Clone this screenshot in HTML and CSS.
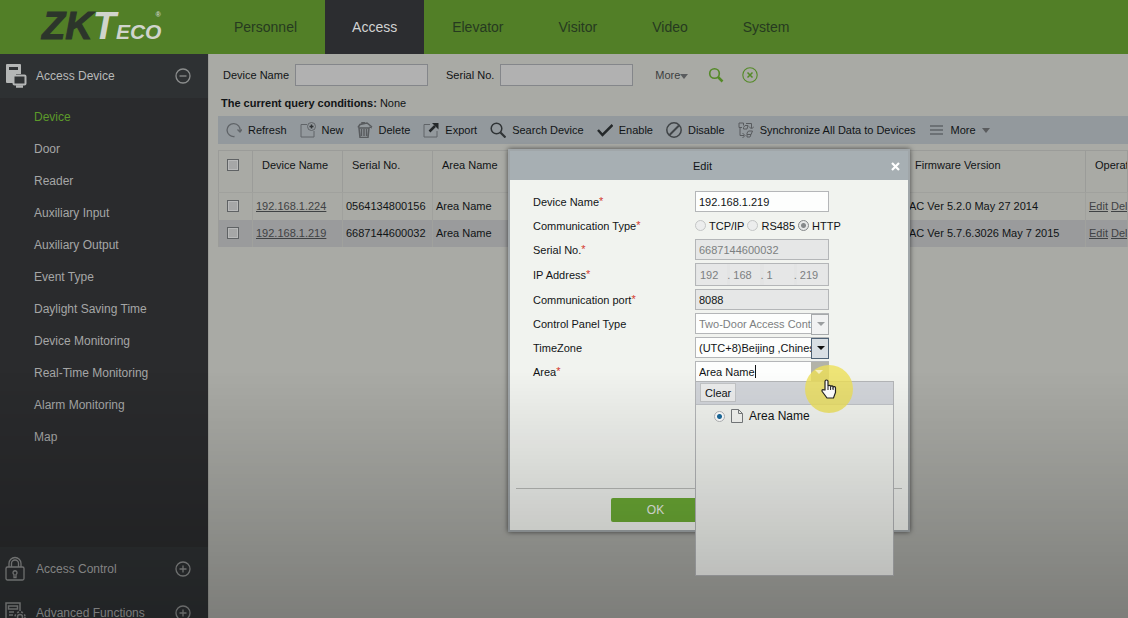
FILE: index.html
```html
<!DOCTYPE html>
<html lang="en">
<head>
    <meta charset="UTF-8">
    <meta name="viewport" content="width=device-width, initial-scale=1.0">
    <title>ZKTeco - Access Device</title>
    <link rel="stylesheet" href="styles.css">
</head>
<body>

    <!-- Top navigation -->
    <header class="topbar">
        <a href="#" class="logo"><span class="logo-zk">ZK</span><span class="logo-t">T</span><span class="logo-eco">ECO</span><span class="logo-reg">®</span></a>
        <nav class="topnav">
            <a href="#">Personnel</a>
            <a href="#" class="active">Access</a>
            <a href="#">Elevator</a>
            <a href="#">Visitor</a>
            <a href="#">Video</a>
            <a href="#">System</a>
        </nav>
    </header>

    <div class="layout">
        <!-- Sidebar -->
        <aside class="sidebar">
            <a href="#" class="group-title open">
                <svg width="24" height="26" viewBox="0 0 24 26">
                    <path d="M2 1h13a1 1 0 0 1 1 1v9h-5v9H2a1 1 0 0 1-1-1V2a1 1 0 0 1 1-1z" fill="#b4b6b6"/>
                    <path d="M4 5.500h9" stroke="#303335" stroke-width="3"/>
                    <rect x="8.500" y="12.500" width="12" height="9" rx="1" fill="#303335" stroke="#b4b6b6" stroke-width="2"/>
                    <path d="M11 23.500h7" stroke="#b4b6b6" stroke-width="2.500"/>
                </svg>
                <span>Access Device</span>
                <svg class="toggle" width="16" height="16" viewBox="0 0 16 16"><circle cx="8" cy="8" r="7"/><path d="M4.500 8h7"/></svg>
            </a>
            <ul class="submenu">
                <li><a href="#" class="current">Device</a></li>
                <li><a href="#">Door</a></li>
                <li><a href="#">Reader</a></li>
                <li><a href="#">Auxiliary Input</a></li>
                <li><a href="#">Auxiliary Output</a></li>
                <li><a href="#">Event Type</a></li>
                <li><a href="#">Daylight Saving Time</a></li>
                <li><a href="#">Device Monitoring</a></li>
                <li><a href="#">Real-Time Monitoring</a></li>
                <li><a href="#">Alarm Monitoring</a></li>
                <li><a href="#">Map</a></li>
            </ul>
            <a href="#" class="group-title">
                <svg width="24" height="26" viewBox="0 0 24 26" fill="none" stroke="#8b8d8d" stroke-width="1.300">
                    <rect x="1" y="11" width="18" height="13" rx="1.500"/>
                    <path d="M4 11V7.500a6 6 0 0 1 12 0V11M6.500 11V7.500a3.500 3.500 0 0 1 7 0V11"/>
                    <path d="M9 18.500a2 2 0 1 1 2 0V21.500H9z"/>
                </svg>
                <span>Access Control</span>
                <svg class="toggle" width="16" height="16" viewBox="0 0 16 16"><circle cx="8" cy="8" r="7"/><path d="M4.500 8h7M8 4.500v7"/></svg>
            </a>
            <a href="#" class="group-title">
                <svg width="24" height="26" viewBox="0 0 24 26" fill="none" stroke="#8b8d8d" stroke-width="1.500">
                    <path d="M9 22H1V3h14v8"/>
                    <path d="M3.500 6h9v3h-9zM4 12h5M4 15h4"/>
                    <circle cx="15" cy="17" r="2.500"/>
                    <circle cx="15" cy="17" r="5" stroke-dasharray="2 2"/>
                </svg>
                <span>Advanced Functions</span>
                <svg class="toggle" width="16" height="16" viewBox="0 0 16 16"><circle cx="8" cy="8" r="7"/><path d="M4.500 8h7M8 4.500v7"/></svg>
            </a>
        </aside>

        <main class="content">
            <!-- Query form -->
            <form class="query">
                <label for="q-name">Device Name</label>
                <input type="text" id="q-name">
                <label for="q-serial">Serial No.</label>
                <input type="text" id="q-serial">
                <a href="#" class="query-more">More<i class="caret"></i></a>
                <button type="button" aria-label="Search">
                    <svg width="16" height="16" viewBox="0 0 16 16" fill="none" stroke="#548a27"><circle cx="6.500" cy="6.500" r="4.800" stroke-width="1.600"/><path d="M10 10l4.500 4.500" stroke-width="2.500"/></svg>
                </button>
                <button type="button" aria-label="Clear">
                    <svg width="16" height="16" viewBox="0 0 16 16" fill="none" stroke="#548a27"><circle cx="8" cy="8" r="7.200" stroke-width="1.100"/><path d="M5.500 5.500l5 5M10.500 5.500l-5 5" stroke-width="1.500"/></svg>
                </button>
            </form>
            <p class="conditions"><b>The current query conditions:</b> None</p>

            <!-- Toolbar -->
            <div class="toolbar">
                <button type="button">
                    <svg viewBox="0 0 16 16" stroke="#606468" stroke-width="1.300"><path d="M8.500 14.500A6.500 6.500 0 1 1 14 9M11.500 7.500L14 10l2-2.500"/></svg>Refresh
                </button>
                <button type="button">
                    <svg viewBox="0 0 16 16" stroke="#606468"><path d="M7 2.500H1V15h13V9"/><circle cx="11.500" cy="4.500" r="4"/><path d="M9.500 4.500h4M11.500 2.500v4" stroke="#303436" stroke-width="1.500"/></svg>New
                </button>
                <button type="button">
                    <svg viewBox="0 0 16 16" stroke="#585b5e"><path d="M2 6h10l-1 9.500H3zM1 5.500l2-3 7-1.500 5 4M5 2V.8h3M4.500 7v7M7 7v7M9.500 7v7" stroke-width="1.500"/><path d="M12 5l3 1"/></svg>Delete
                </button>
                <button type="button">
                    <svg viewBox="0 0 16 16" stroke="#606468"><path d="M7 2.500H1V15h13V9"/><path d="M6.500 9.500L12 4" stroke="#24282a" stroke-width="2.500"/><path d="M9 1h6.500v6.500z" fill="#24282a" stroke="none"/></svg>Export
                </button>
                <button type="button">
                    <svg viewBox="0 0 16 16" stroke="#303436"><circle cx="6.500" cy="6.500" r="5.300" stroke-width="1.500"/><path d="M10.500 10.500L15.500 15.500" stroke-width="2.200"/></svg>Search Device
                </button>
                <button type="button">
                    <svg viewBox="0 0 16 16"><path d="M1 8l4.500 5L15.500 3" stroke="#24282a" stroke-width="2.500"/></svg>Enable
                </button>
                <button type="button">
                    <svg viewBox="0 0 16 16" stroke="#404447" stroke-width="1.500"><circle cx="8" cy="8" r="7.200"/><path d="M3.500 13L13 3.500" stroke-width="2"/></svg>Disable
                </button>
                <button type="button">
                    <svg viewBox="0 0 16 16" stroke="#585b5e"><path d="M5.500 3.500V1H1v4.500h3M2 5.500v8h4M4.500 11l2.500 2.500L4.500 16M8 1.500h5.500V6M11 4.500L13.500 7 16 4.500M5.500 5.500l1.500-2h3l-1 3.500H5.500zM9 11l1.500-2h4L13 12.500H9zM9 12.500V15h3l1-2.500"/></svg>Synchronize All Data to Devices
                </button>
                <button type="button">
                    <svg viewBox="0 0 16 16" stroke="#606468" stroke-width="1.500"><path d="M1 4h13M1 8h13M1 12h13"/></svg>More <i class="caret"></i>
                </button>
            </div>

            <!-- Device list -->
            <table class="grid">
                <colgroup>
                    <col class="col-check">
                    <col class="col-name">
                    <col class="col-name">
                    <col class="col-name">
                    <col class="col-info">
                    <col class="col-firmware">
                    <col>
                </colgroup>
                <thead>
                    <tr>
                        <th><input type="checkbox" aria-label="Select all"></th>
                        <th>Device Name</th>
                        <th>Serial No.</th>
                        <th>Area Name</th>
                        <th></th>
                        <th>Firmware Version</th>
                        <th>Operations</th>
                    </tr>
                </thead>
                <tbody>
                    <tr>
                        <td><input type="checkbox" aria-label="Select 192.168.1.224"></td>
                        <td><a href="#">192.168.1.224</a></td>
                        <td>0564134800156</td>
                        <td>Area Name</td>
                        <td></td>
                        <td>AC Ver 5.2.0 May 27 2014</td>
                        <td><a href="#">Edit</a> <a href="#">Delete</a></td>
                    </tr>
                    <tr>
                        <td><input type="checkbox" aria-label="Select 192.168.1.219"></td>
                        <td><a href="#">192.168.1.219</a></td>
                        <td>6687144600032</td>
                        <td>Area Name</td>
                        <td></td>
                        <td>AC Ver 5.7.6.3026 May 7 2015</td>
                        <td><a href="#">Edit</a> <a href="#">Delete</a></td>
                    </tr>
                </tbody>
            </table>

            <!-- Edit dialog -->
            <section class="dialog" role="dialog" aria-labelledby="dialog-title">
                <div class="dialog-head">
                    <h2 id="dialog-title">Edit</h2>
                    <button type="button" class="dialog-close" aria-label="Close">
                        <svg width="9" height="9" viewBox="0 0 9 9"><path d="M1 1l7 7M8 1L1 8" stroke="#fff" stroke-width="2.200"/></svg>
                    </button>
                </div>
                <form class="dialog-body">
                    <div class="fields">
                        <label for="name">Device Name<em>*</em></label>
                        <input type="text" id="name" class="edited" value="192.168.1.219">

                        <span id="type-label">Communication Type<em>*</em></span>
                        <div class="radios" role="radiogroup" aria-labelledby="type-label">
                            <input type="radio" name="type" id="tcp" disabled><label for="tcp">TCP/IP</label>
                            <input type="radio" name="type" id="rs485" disabled><label for="rs485">RS485</label>
                            <input type="radio" name="type" id="http" checked disabled><label for="http">HTTP</label>
                        </div>

                        <label for="serial">Serial No.<em>*</em></label>
                        <input type="text" id="serial" value="6687144600032" disabled>

                        <label for="ip1">IP Address<em>*</em></label>
                        <div class="ip">
                            <input type="text" id="ip1" value="192" disabled>.
                            <input type="text" aria-label="IP part 2" value="168" disabled>.
                            <input type="text" aria-label="IP part 3" value="1" disabled>.
                            <input type="text" aria-label="IP part 4" value="219" disabled>
                        </div>

                        <label for="port">Communication port<em>*</em></label>
                        <input type="text" id="port" value="8088" readonly>

                        <label for="panel">Control Panel Type</label>
                        <div class="combo disabled">
                            <select id="panel" disabled><option>Two-Door Access Control Panel</option></select>
                        </div>

                        <label for="zone">TimeZone</label>
                        <div class="combo">
                            <select id="zone"><option>(UTC+8)Beijing ,Chinese</option></select>
                        </div>

                        <label for="area">Area<em>*</em></label>
                        <div class="combo focused">
                            <input type="text" id="area" value="Area Name">
                            <i class="text-cursor"></i>
                            <div class="area-menu">
                                <div class="area-tools"><button type="button">Clear</button></div>
                                <div class="area-item">
                                    <input type="radio" name="area-pick" id="area-1" checked>
                                    <label for="area-1">
                                        <svg width="12" height="14" viewBox="0 0 12 14" fill="#f4f5f2" stroke="#777a7c"><path d="M.5.5h7l4 4v9H.5zM7.500.5v4h4"/></svg>
                                        Area Name
                                    </label>
                                </div>
                            </div>
                            <div class="pointer">
                                <svg width="16" height="20" viewBox="0 0 16 20"><path d="M4 11V2.500a1.500 1.500 0 0 1 3 0V7.500a1.300 1.300 0 0 1 2.600.2 1.300 1.300 0 0 1 2.500.5 1.300 1.300 0 0 1 2.400.8v4.500L12.500 19H6L1.200 12.500C.5 11 2 10 3 11z" fill="#fff" stroke="#222" stroke-width="1.200"/><path d="M7 7.500V11M9.600 8v3M12.100 8.500V11" stroke="#222"/></svg>
                            </div>
                        </div>
                    </div>
                    <div class="dialog-foot">
                        <button type="submit">OK</button>
                    </div>
                </form>
            </section>
        </main>
    </div>

</body>
</html>
```

FILE: styles.css
```css
* {
    box-sizing: border-box;
}

body {
    margin: 0;
    height: 100vh;
    overflow: hidden;
    font-family: "Liberation Sans", Arial, sans-serif;
    font-size: 11px;
    color: #111416;
    background: #a9aaa5;
}

/* Dimming towards the bottom of the page */
body::after {
    content: "";
    position: fixed;
    inset: 0;
    background: linear-gradient(rgba(0, 0, 0, 0) 60%, rgba(0, 0, 0, 0.26) 100%);
    pointer-events: none;
    z-index: 10;
}

button, input, select {
    font: inherit;
    color: inherit;
}

button {
    padding: 0;
    border: none;
    background: none;
    cursor: pointer;
}

a {
    color: inherit;
    text-decoration: none;
}

/* Top bar */
.topbar {
    display: flex;
    height: 54px;
    background: #527f27;
}

.logo {
    display: flex;
    align-items: baseline;
    width: 207px;
    padding: 4px 0 0 42px;
    font-size: 38px;
    font-weight: bold;
    font-style: italic;
    line-height: 44px;
    color: #d0d4cc;
}

.logo-zk {
    color: #2c352b;
    -webkit-text-stroke: 1px #2c352b;
}

.logo-eco {
    font-size: 21px;
}

.logo-reg {
    align-self: flex-start;
    margin-left: -6px;
    font-size: 7px;
    line-height: 22px;
}

.topnav {
    display: flex;
    gap: 1px;
}

.topnav a {
    padding: 0 27px;
    font-size: 14px;
    line-height: 54px;
    color: #263a20;
}

.topnav .active {
    background: #2c2d30;
    color: #d2d3d3;
}

.layout {
    display: flex;
    height: calc(100vh - 54px);
}

/* Sidebar */
.sidebar {
    flex: 0 0 208px;
    background: #2a2b2d;
    font-size: 12px;
    color: #a5a6a6;
    overflow: hidden;
}

.group-title {
    display: flex;
    align-items: center;
    height: 44px;
    padding: 0 17px 0 5px;
    background: #2e3133;
}

.group-title span {
    flex: 1;
    margin-left: 7px;
}

.open {
    color: #b9baba;
}

.toggle {
    fill: none;
    stroke: #8b8d8d;
    stroke-width: 1.3;
}

.submenu {
    height: calc(100vh - 169px);
    margin: 0;
    padding: 3px 0 0;
    list-style: none;
}

.submenu a {
    display: block;
    padding-left: 34px;
    line-height: 32px;
}

.submenu .current {
    color: #5c9a2a;
}

/* Content */
.content {
    flex: 1;
    min-width: 0;
    position: relative;
    padding-left: 9px;
    border-left: 1px solid #9b9c97;
}

.query {
    display: flex;
    align-items: center;
    height: 42px;
    padding-left: 5px;
}

.query input {
    width: 133px;
    height: 22px;
    margin: 0 18px 0 6px;
    border: 1px solid #84868a;
    background: #b1b1b1;
}

.query button {
    height: 16px;
    margin-left: 18px;
}

.query-more {
    margin: 0 2px 0 4px;
    color: #3c3e3f;
}

.caret {
    display: inline-block;
    border: 4px solid transparent;
    border-top: 5px solid #5a5c5e;
    border-bottom: none;
    vertical-align: middle;
}

.conditions {
    margin: 0;
    padding-left: 3px;
    line-height: 14px;
}

.toolbar {
    display: flex;
    gap: 13px;
    height: 28px;
    margin: 6px 0;
    padding-left: 8px;
    background: #93999d;
    white-space: nowrap;
}

.toolbar button {
    display: flex;
    align-items: center;
    gap: 6px;
}

.toolbar svg {
    width: 16px;
    height: 16px;
    fill: none;
}

/* Device list */
.grid {
    width: 100%;
    table-layout: fixed;
    border-collapse: collapse;
    border-top: 1px solid #9b9c99;
    border-left: 1px solid #9b9c99;
}

.col-check {
    width: 34px;
}

.col-name {
    width: 90px;
}

.col-info {
    width: 383px;
}

.col-firmware {
    width: 180px;
}

.grid th {
    height: 42px;
    padding: 0 0 14px 9px;
    border-right: 1px solid #9b9c99;
    border-bottom: 1px solid #a0a19d;
    font-weight: normal;
    text-align: left;
    white-space: nowrap;
    overflow: hidden;
}

.grid td {
    height: 27px;
    padding: 0 0 0 3px;
    border-right: 1px solid #a0a19d;
    white-space: nowrap;
    overflow: hidden;
}

.grid tbody tr:nth-child(2) {
    background: #9a9b9c;
}

.grid th:first-child, .grid td:first-child {
    padding-left: 8px;
}

.grid a {
    color: #3f4244;
    text-decoration: underline;
}

.grid input {
    appearance: none;
    display: block;
    width: 12px;
    height: 12px;
    margin: 0;
    border: 1px solid #5f6264;
    background: #a6a7a7;
    box-shadow: inset 0 0 0 1px #b9baba;
}

/* Edit dialog */
.dialog {
    position: absolute;
    left: 299px;
    top: 95px;
    width: 402px;
    border: 2px solid #a0a6a9;
    background: #f1f3ef;
    box-shadow: 0 0 5px rgba(0, 0, 0, 0.6);
}

.dialog-head {
    display: flex;
    align-items: center;
    height: 29px;
    padding-right: 8px;
    background: #a7afb3;
}

.dialog-head h2 {
    flex: 1;
    margin: 0;
    padding-left: 4px;
    font-size: 11px;
    font-weight: normal;
    text-align: center;
}

.dialog-close {
    height: 9px;
}

.dialog-body {
    padding: 11px 6px 8px;
}

.fields {
    display: grid;
    grid-template-columns: 162px 134px;
    grid-auto-rows: minmax(21px, auto);
    gap: 3px 0;
    align-items: center;
    min-height: 298px;
    align-content: start;
    padding-left: 17px;
    border-bottom: 1px solid #b9bbb8;
}

.fields em {
    font-style: normal;
    line-height: 0;
    color: #d43a30;
    vertical-align: 1px;
}

.fields input[type="text"], .fields select {
    display: block;
    width: 100%;
    height: 21px;
    margin: 0;
    padding: 0 3px;
    border: 1px solid #b4b6b8;
    border-radius: 0;
    background: #fdfefd;
}

.fields .edited {
    border-color: #9fbf9f;
}

.fields input[type="text"]:disabled, .fields input[type="text"]:read-only {
    background: #e6e7e7;
}

.fields input:disabled {
    color: #7c7f81;
}

.radios {
    display: flex;
    align-items: center;
    white-space: nowrap;
}

.radios label {
    margin: 0 3px;
}

.fields input[type="radio"] {
    appearance: none;
    flex: none;
    width: 11px;
    height: 11px;
    margin: 0;
    border: 1px solid #c4c6c6;
    border-radius: 50%;
    background: #eceded;
}

.fields input[type="radio"]:checked {
    border-color: #85888a;
    background: radial-gradient(circle, #85888a 2px, #e6e7e7 3px);
}

.ip {
    display: flex;
    align-items: center;
    height: 23px;
    padding: 0 1px;
    border: 1px solid #b4b6b8;
    background: #e3e4e4;
    color: #7c7f81;
}

.fields .ip input[type="text"] {
    flex: 1;
    min-width: 0;
    border: none;
}

.combo {
    position: relative;
}

.fields select {
    appearance: none;
    padding-right: 14px;
    opacity: 1;
}

.disabled select {
    color: #7c7f81;
}

.combo::before {
    content: "";
    position: absolute;
    right: 0;
    top: 1px;
    width: 16px;
    height: 19px;
    border: 1px solid #4e6276;
    background: #d9dfe4;
    pointer-events: none;
}

.combo::after {
    content: "";
    position: absolute;
    right: 4px;
    top: 9px;
    border: 4px solid transparent;
    border-top-color: #111;
    border-bottom: none;
    pointer-events: none;
}

.combo.disabled::before {
    border-color: #a6a9ab;
    background: #f1f2f2;
}

.combo.disabled::after {
    border-top-color: #9b9e9f;
}

.combo.focused::before {
    border-color: #b3b3a8;
    background: #b3b3a8;
}

.combo.focused::after {
    border-top-color: #f6efc0;
    right: 6px;
    z-index: 3;
}

.text-cursor {
    position: absolute;
    left: 60px;
    top: 4px;
    width: 1px;
    height: 13px;
    background: #111416;
}

/* Area drop-down */
.area-menu {
    position: absolute;
    left: 0;
    top: 20px;
    width: 199px;
    height: 195px;
    border: 1px solid #b4b6b8;
    background: #f1f3ef;
    z-index: 1;
}

.area-tools {
    padding: 1px 4px 2px;
    background: #d2d5da;
    border-bottom: 1px solid #c0c3c7;
}

.area-tools button {
    display: block;
    height: 19px;
    padding: 0 4px;
    border: 1px solid #c2c4c6;
    background: #ebecec;
}

.area-item {
    display: flex;
    align-items: center;
    gap: 6px;
    padding: 4px 0 0 18px;
    font-size: 12px;
}

.area-item label {
    display: flex;
    align-items: center;
    gap: 6px;
}

.fields .area-item input[type="radio"] {
    border-color: #b4b6b8;
    background: radial-gradient(circle, #1c6a9c 2px, #fff 3px);
}

/* Highlighted mouse pointer */
.pointer {
    position: absolute;
    left: 110px;
    top: 4px;
    display: flex;
    justify-content: center;
    align-items: center;
    width: 48px;
    height: 48px;
    border-radius: 50%;
    background: rgba(238, 224, 88, 0.8);
    z-index: 2;
    pointer-events: none;
}

.dialog-foot {
    padding: 9px 0 0 95px;
}

.dialog-foot button {
    display: block;
    width: 89px;
    height: 24px;
    border-radius: 2px;
    background: #6cab35;
    font-size: 12px;
    color: #eef2ea;
}
```
